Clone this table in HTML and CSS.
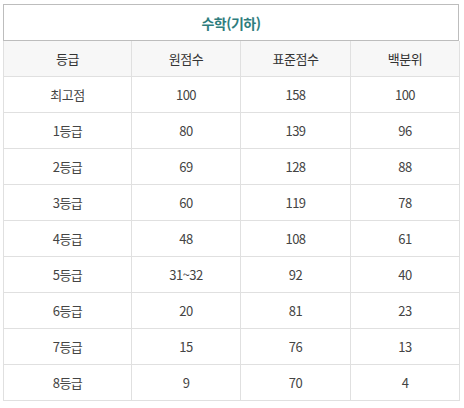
FILE: index.html
```html
<!DOCTYPE html>
<html lang="ko">
<head>
<meta charset="utf-8">
<link rel="stylesheet" href="styles.css">
</head>
<body>
<div class="wrap">
  <div class="title">수학(기하)</div>
  <table class="grade">
    <colgroup>
      <col class="c1"><col class="c2"><col class="c3"><col class="c4">
    </colgroup>
    <thead>
      <tr><th>등급</th><th>원점수</th><th>표준점수</th><th>백분위</th></tr>
    </thead>
    <tbody>
      <tr><td>최고점</td><td>100</td><td>158</td><td>100</td></tr>
      <tr><td>1등급</td><td>80</td><td>139</td><td>96</td></tr>
      <tr><td>2등급</td><td>69</td><td>128</td><td>88</td></tr>
      <tr><td>3등급</td><td>60</td><td>119</td><td>78</td></tr>
      <tr><td>4등급</td><td>48</td><td>108</td><td>61</td></tr>
      <tr><td>5등급</td><td>31~32</td><td>92</td><td>40</td></tr>
      <tr><td>6등급</td><td>20</td><td>81</td><td>23</td></tr>
      <tr><td>7등급</td><td>15</td><td>76</td><td>13</td></tr>
      <tr><td>8등급</td><td>9</td><td>70</td><td>4</td></tr>
    </tbody>
  </table>
</div>
</body>
</html>
```

FILE: styles.css
```css
html, body {
  margin: 0;
  padding: 0;
  background: #fff;
}
body {
  font-family: "Noto Sans CJK KR", "Noto Sans", sans-serif;
  color: #444;
}
.wrap {
  width: 456px;
  margin: 4px 0 0 3px;
}
.title {
  box-sizing: border-box;
  height: 37px;
  border: 1px solid #bdbdbd;
  display: flex;
  align-items: center;
  justify-content: center;
  color: #2e7d7d;
  font-weight: bold;
  font-size: 14px;
  letter-spacing: -0.5px;
}
.grade {
  width: 456px;
  border-collapse: collapse;
  table-layout: fixed;
}
.c1 { width: 128px; }
.c2 { width: 109px; }
.c3 { width: 110px; }
.c4 { width: 109px; }
.grade th, .grade td {
  border: 1px solid #e0e0e0;
  height: 35px;
  padding: 0;
  text-align: center;
  font-size: 13px;
  font-weight: normal;
  letter-spacing: -0.5px;
}
.grade thead tr:first-child th {
  border-top: none;
}
.grade th {
  background: #f7f7f7;
  color: #333;
  height: 35px;
}
.grade td {
  color: #444;
}
```
